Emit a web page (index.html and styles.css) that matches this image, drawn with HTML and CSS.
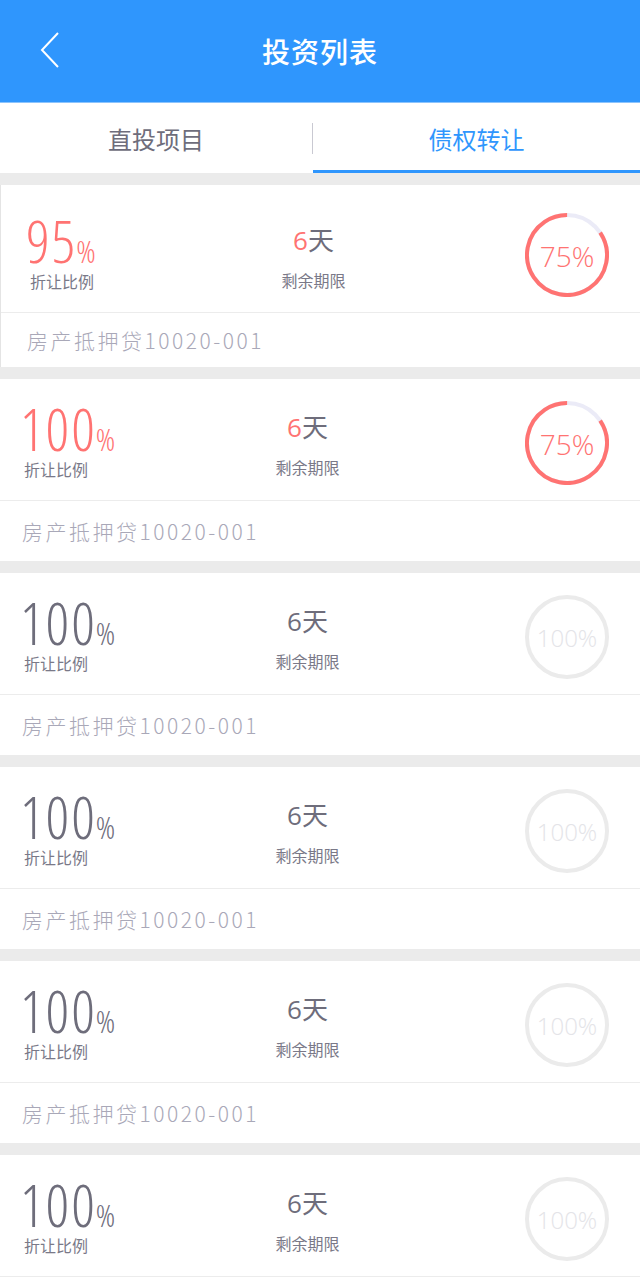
FILE: index.html
```html
<!DOCTYPE html>
<html lang="zh">
<head>
<meta charset="utf-8">
<title>投资列表</title>
<link rel="stylesheet" href="styles.css">
</head>
<body>
<header class="topbar">
  <svg class="back" width="20" height="36" viewBox="0 0 20 36"><polyline points="18,1 2,18 18,35" fill="none" stroke="#fff" stroke-width="2"/></svg>
  <h1 class="title">投资列表</h1>
</header>
<nav class="tabs">
  <div class="tab first-tab">直投项目</div>
  <div class="tab-sep"></div>
  <div class="tab active">债权转让</div>
</nav>
<main class="list">
  <section class="card first">
    <div class="card-top">
      <div class="rate"><div class="rate-num red"><span class="big">95</span><span class="pct">%</span></div><div class="label">折让比例</div></div>
      <div class="term"><div class="term-val"><span class="red">6</span>天</div><div class="label">剩余期限</div></div>
      <div class="ring">
        <svg width="84" height="84" viewBox="0 0 84 84"><circle cx="42" cy="42" r="40" fill="none" stroke="#ebebf7" stroke-width="4"/><circle cx="42" cy="42" r="40" fill="none" stroke="#ff7372" stroke-width="4" stroke-dasharray="212 252" transform="rotate(-34 42 42)"/></svg>
        <span class="ring-text red">75%</span>
      </div>
    </div>
    <div class="card-bottom">房产抵押贷10020-001</div>
  </section>
  <section class="card">
    <div class="card-top">
      <div class="rate"><div class="rate-num red"><span class="big">100</span><span class="pct">%</span></div><div class="label">折让比例</div></div>
      <div class="term"><div class="term-val"><span class="red">6</span>天</div><div class="label">剩余期限</div></div>
      <div class="ring">
        <svg width="84" height="84" viewBox="0 0 84 84"><circle cx="42" cy="42" r="40" fill="none" stroke="#ebebf7" stroke-width="4"/><circle cx="42" cy="42" r="40" fill="none" stroke="#ff7372" stroke-width="4" stroke-dasharray="212 252" transform="rotate(-34 42 42)"/></svg>
        <span class="ring-text red">75%</span>
      </div>
    </div>
    <div class="card-bottom">房产抵押贷10020-001</div>
  </section>
  <section class="card">
    <div class="card-top">
      <div class="rate"><div class="rate-num"><span class="big">100</span><span class="pct">%</span></div><div class="label">折让比例</div></div>
      <div class="term"><div class="term-val">6天</div><div class="label">剩余期限</div></div>
      <div class="ring">
        <svg width="84" height="84" viewBox="0 0 84 84"><circle cx="42" cy="42" r="40" fill="none" stroke="#ebebeb" stroke-width="4"/></svg>
        <span class="ring-text done">100%</span>
      </div>
    </div>
    <div class="card-bottom">房产抵押贷10020-001</div>
  </section>
  <section class="card">
    <div class="card-top">
      <div class="rate"><div class="rate-num"><span class="big">100</span><span class="pct">%</span></div><div class="label">折让比例</div></div>
      <div class="term"><div class="term-val">6天</div><div class="label">剩余期限</div></div>
      <div class="ring">
        <svg width="84" height="84" viewBox="0 0 84 84"><circle cx="42" cy="42" r="40" fill="none" stroke="#ebebeb" stroke-width="4"/></svg>
        <span class="ring-text done">100%</span>
      </div>
    </div>
    <div class="card-bottom">房产抵押贷10020-001</div>
  </section>
  <section class="card">
    <div class="card-top">
      <div class="rate"><div class="rate-num"><span class="big">100</span><span class="pct">%</span></div><div class="label">折让比例</div></div>
      <div class="term"><div class="term-val">6天</div><div class="label">剩余期限</div></div>
      <div class="ring">
        <svg width="84" height="84" viewBox="0 0 84 84"><circle cx="42" cy="42" r="40" fill="none" stroke="#ebebeb" stroke-width="4"/></svg>
        <span class="ring-text done">100%</span>
      </div>
    </div>
    <div class="card-bottom">房产抵押贷10020-001</div>
  </section>
  <section class="card">
    <div class="card-top">
      <div class="rate"><div class="rate-num"><span class="big">100</span><span class="pct">%</span></div><div class="label">折让比例</div></div>
      <div class="term"><div class="term-val">6天</div><div class="label">剩余期限</div></div>
      <div class="ring">
        <svg width="84" height="84" viewBox="0 0 84 84"><circle cx="42" cy="42" r="40" fill="none" stroke="#ebebeb" stroke-width="4"/></svg>
        <span class="ring-text done">100%</span>
      </div>
    </div>
    <div class="card-bottom">房产抵押贷10020-001</div>
  </section>
</main>
</body>
</html>
```
FILE: styles.css
```css
* { box-sizing: border-box; }
html, body { margin: 0; padding: 0; }
body {
  width: 640px;
  background: #ebebeb;
  font-family: "Noto Sans CJK SC", "Noto Sans", sans-serif;
  color: #6e6d7b;
}
.topbar {
  height: 103px;
  background: #2f96fd;
  border-bottom: 1px solid #8cc4fd;
  display: flex;
  align-items: center;
  justify-content: center;
  position: relative;
}
.back {
  position: absolute;
  left: 40px;
  top: 32px;
}
.title {
  margin: 0;
  color: #fff;
  font-size: 28px;
  font-weight: 500;
  letter-spacing: 1px;
}
.tabs {
  height: 70px;
  background: #fff;
  display: flex;
  align-items: center;
}
.tab {
  flex: 1;
  height: 100%;
  display: flex;
  align-items: center;
  justify-content: center;
  font-size: 24px;
  color: #6e6d7b;
  padding-top: 0;
}
.tab.first-tab { flex: 0 0 312px; }
.tab.active {
  color: #2f96fd;
  border-bottom: 3px solid #2f96fd;
  padding-top: 3px;
}
.tab-sep {
  width: 1px;
  height: 31px;
  background: #c9c9d2;
}
.list {
  padding-top: 12px;
  display: flex;
  flex-direction: column;
  gap: 12px;
}
.card { background: #fff; }
.card.first { border-left: 1px solid #e4e4e4; }
.card-top {
  height: 122px;
  padding: 6px 31px 0 20px;
  display: grid;
  grid-template-columns: 200px 175px 1fr;
  align-items: center;
  border-bottom: 1px solid #ececec;
}
.card.first .card-top { height: 128px; padding-top: 12px; padding-left: 25px; }
.card.first .term { margin-top: 5px; }
.rate-num {
  font-family: "Open Sans", Roboto, sans-serif;
  font-weight: 300;
  font-stretch: 75%;
  line-height: 44px;
  height: 44px;
  white-space: nowrap;
  color: #6e6d7b;
}
.rate-num.red { color: #ff7372; }
.big { font-size: 58px; letter-spacing: 2px; }
.pct { font-size: 32px; margin-left: -1px; }
.red { color: #ff7372; }
.label {
  font-size: 16px;
  line-height: 18px;
  margin-top: 9px;
  color: #7a7988;
  padding-left: 4px;
}
.term { text-align: center; margin-top: 2px; }
.term-val {
  font-family: "Open Sans", "Noto Sans CJK SC", sans-serif;
  font-size: 26px;
  line-height: 30px;
  color: #6e6d7b;
}
.term .label { margin-top: 16px; padding-left: 0; }
.ring {
  justify-self: end;
  width: 84px;
  height: 84px;
  position: relative;
  display: flex;
  align-items: center;
  justify-content: center;
}
.ring svg { position: absolute; left: 0; top: 0; }
.ring-text {
  position: relative;
  font-family: "Open Sans", Roboto, sans-serif;
  font-weight: 300;
  font-size: 28px;
  margin-top: 2px;
}
.ring-text.done { color: #e4e4e8; font-size: 24px; }
.card-bottom {
  height: 60px;
  display: flex;
  align-items: center;
  padding-left: 22px;
  font-size: 21px;
  letter-spacing: 2.5px;
  color: #a9a8b8;
  font-weight: 300;
}
.card.first .card-bottom { height: 54px; padding-left: 26px; }
```
